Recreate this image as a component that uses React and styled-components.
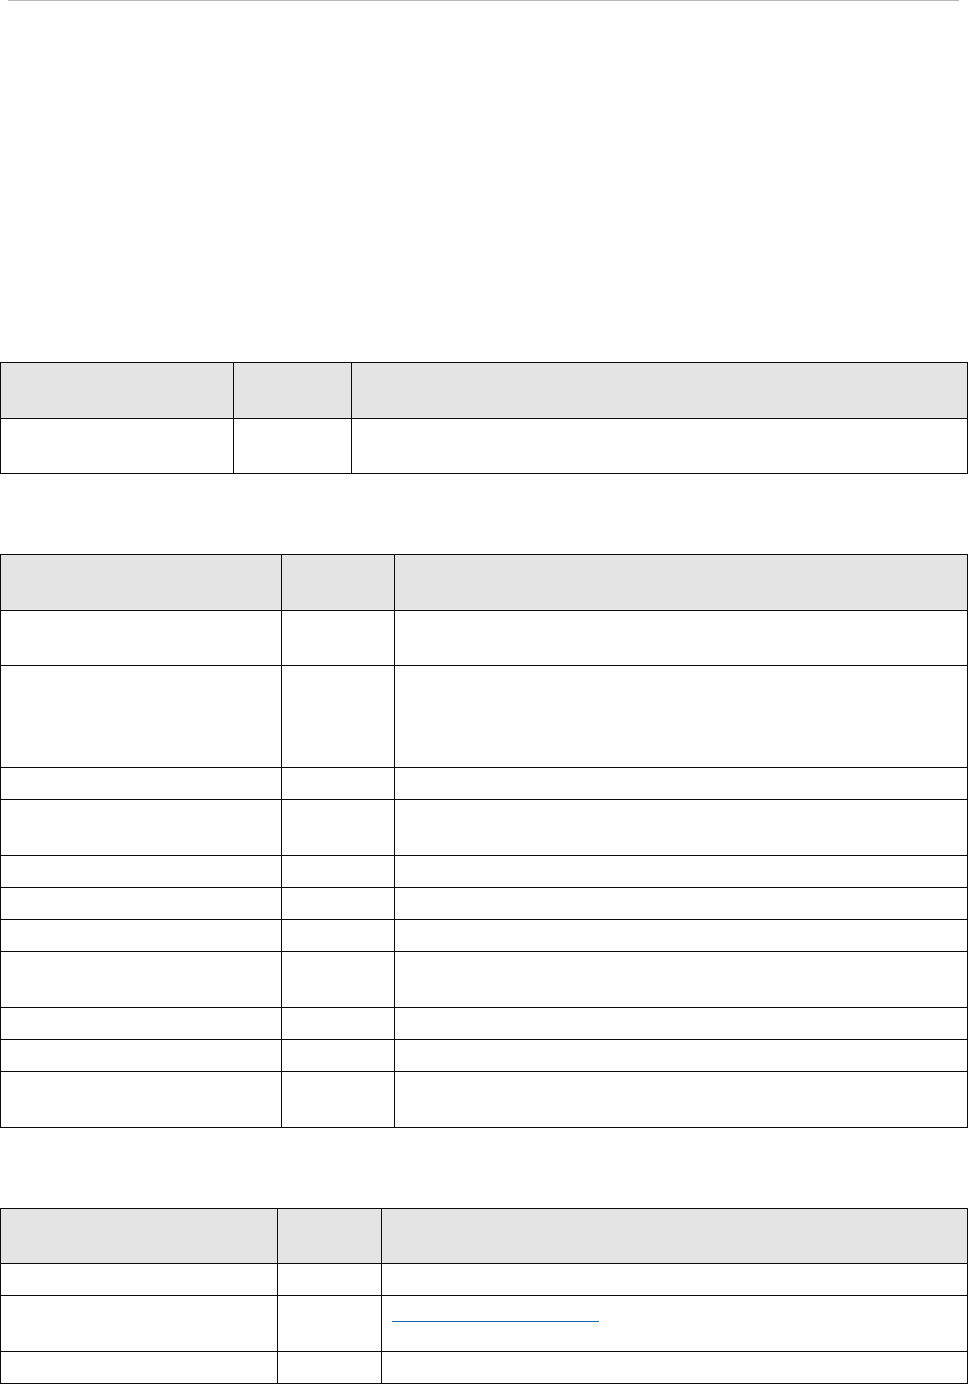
import React from "react";
import styled, { createGlobalStyle } from "styled-components";

const Global = createGlobalStyle`
  html, body { margin: 0; padding: 0; background: #ffffff; }
  body { font-family: "Liberation Sans", Arial, sans-serif; font-size: 14px; color: #000; }
`;

const Page = styled.div`
  display: flex;
  flex-direction: column;
  width: 968px;
`;

const Rule = styled.div`
  height: 1px;
  margin: 0 9px 0 8px;
  background: #b8b8b8;
`;

const Table = styled.table`
  width: 968px;
  border-collapse: collapse;
  table-layout: fixed;
  margin-top: ${(p) => p.$gap}px;
`;

const Cell = styled.td`
  border: 1px solid #0a0a0a;
  padding: 0 10px;
  height: ${(p) => p.$h}px;
  box-sizing: border-box;
  vertical-align: top;
  background: ${(p) => (p.$head ? "#e4e4e4" : "#ffffff")};
`;

const LinkLine = styled.a`
  display: inline-block;
  width: 207px;
  margin-top: 25px;
  border-bottom: 1px solid #1c67ad;
  line-height: 0;
`;

const tables = [
  {
    gap: 361,
    cols: [233, 118],
    rows: [56, 55],
  },
  {
    gap: 80,
    cols: [281, 113],
    rows: [56, 55, 102, 32, 56, 32, 32, 32, 56, 32, 32, 56],
  },
  {
    gap: 80,
    cols: [277, 104],
    rows: [55, 32, 56, 32],
    link: 2,
  },
];

export default function App() {
  return (
    <>
      <Global />
      <Page>
        <Rule />
        {tables.map((t, ti) => (
          <Table key={ti} $gap={t.gap}>
            <colgroup>
              <col style={{ width: t.cols[0] }} />
              <col style={{ width: t.cols[1] }} />
              <col />
            </colgroup>
            <tbody>
              {t.rows.map((h, ri) => (
                <tr key={ri}>
                  {[0, 1, 2].map((ci) => (
                    <Cell key={ci} $h={h} $head={ri === 0}>
                      {t.link === ri && ci === 2 ? <LinkLine href="#" /> : null}
                    </Cell>
                  ))}
                </tr>
              ))}
            </tbody>
          </Table>
        ))}
      </Page>
    </>
  );
}
